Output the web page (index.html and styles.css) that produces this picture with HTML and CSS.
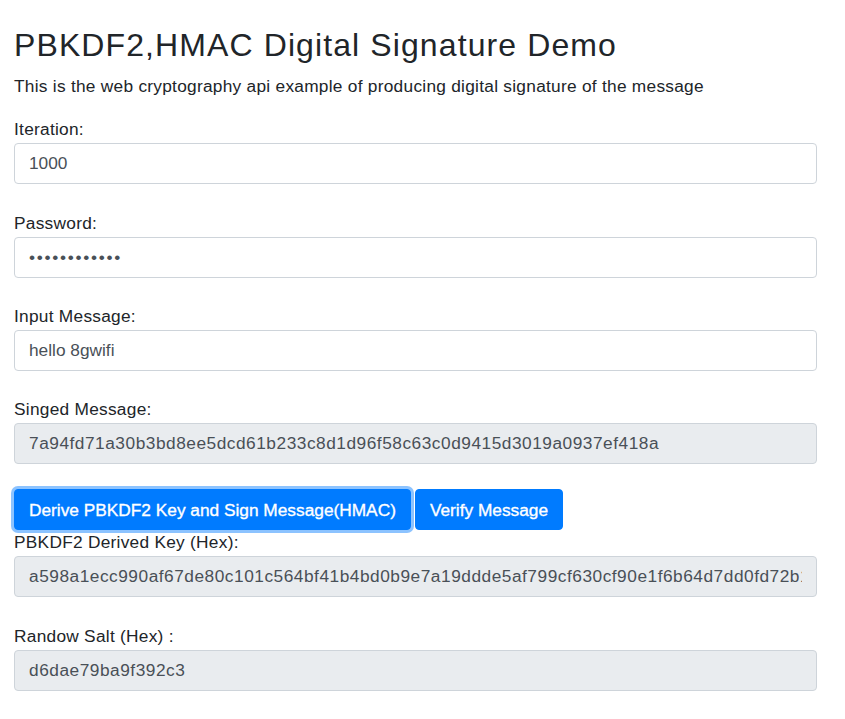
FILE: index.html
```html
<!DOCTYPE html>
<html lang="en">
<head>
<meta charset="utf-8">
<title>PBKDF2,HMAC Digital Signature Demo</title>
<link rel="stylesheet" href="styles.css">
</head>
<body>
<div class="page">
  <h2 class="title">PBKDF2,HMAC Digital Signature Demo</h2>
  <p class="intro">This is the web cryptography api example of producing digital signature of the message</p>

  <div class="group">
    <label class="field-label" for="iter">Iteration:</label>
    <input class="field" id="iter" type="text" value="1000">
  </div>

  <div class="group">
    <label class="field-label" for="pwd">Password:</label>
    <input class="field field-password" id="pwd" type="password" value="hello 8gwifi">
  </div>

  <div class="group">
    <label class="field-label" for="msg">Input Message:</label>
    <input class="field" id="msg" type="text" value="hello 8gwifi">
  </div>

  <div class="group">
    <label class="field-label" for="sig">Singed Message:</label>
    <input class="field field-readonly" id="sig" type="text" readonly value="7a94fd71a30b3bd8ee5dcd61b233c8d1d96f58c63c0d9415d3019a0937ef418a">
  </div>

  <div class="actions">
    <button class="btn btn-focus" type="button">Derive PBKDF2 Key and Sign Message(HMAC)</button>
    <button class="btn" type="button">Verify Message</button>
  </div>

  <div class="group">
    <label class="field-label" for="key">PBKDF2 Derived Key (Hex):</label>
    <input class="field field-readonly" id="key" type="text" readonly value="a598a1ecc990af67de80c101c564bf41b4bd0b9e7a19ddde5af799cf630cf90e1f6b64d7dd0fd72b1f3e">
  </div>

  <div class="group">
    <label class="field-label" for="salt">Randow Salt (Hex) :</label>
    <input class="field field-readonly" id="salt" type="text" readonly value="d6dae79ba9f392c3">
  </div>
</div>
</body>
</html>
```

FILE: styles.css
```css
html, body {
  margin: 0;
  padding: 0;
  background: #ffffff;
}

body {
  font-family: "Liberation Sans", Arial, sans-serif;
  font-size: 17.3px;
  line-height: 26px;
  color: #212529;
  letter-spacing: 0.27px;
}

.page {
  padding: 25.9px 28px 0 14px;
}

.title {
  margin: 0 0 9px;
  font-size: 32px;
  line-height: 38.4px;
  font-weight: 400;
  letter-spacing: 1.1px;
  color: #212529;
}

.intro {
  margin: 0 0 17px;
}

.group {
  margin-bottom: 25.3px;
}

.field-label {
  display: block;
  margin-bottom: 1px;
}

.field {
  display: block;
  box-sizing: border-box;
  width: 100%;
  height: 41px;
  margin: 0;
  padding: 0 14px;
  border: 1px solid #ced4da;
  border-radius: 4px;
  background: #ffffff;
  font-family: inherit;
  font-size: 17.3px;
  letter-spacing: 0;
  color: #495057;
  outline: none;
}

.field-password {
  letter-spacing: 1.7px;
}

.field-readonly {
  background: #e9ecef;
  letter-spacing: 0.52px;
}

.actions {
  display: flex;
  gap: 4px;
  margin-top: 2.5px;
  margin-bottom: -1px;
}

.btn {
  box-sizing: border-box;
  height: 41px;
  padding: 0 14px;
  border: 1px solid #007bff;
  border-radius: 4px;
  background: #007bff;
  color: #ffffff;
  font-family: inherit;
  font-size: 17.3px;
  line-height: 26px;
  letter-spacing: 0;
  -webkit-text-stroke: 0.35px #ffffff;
  cursor: pointer;
}

.btn-focus {
  box-shadow: 0 0 0 3px rgba(0, 123, 255, 0.45);
}
```
